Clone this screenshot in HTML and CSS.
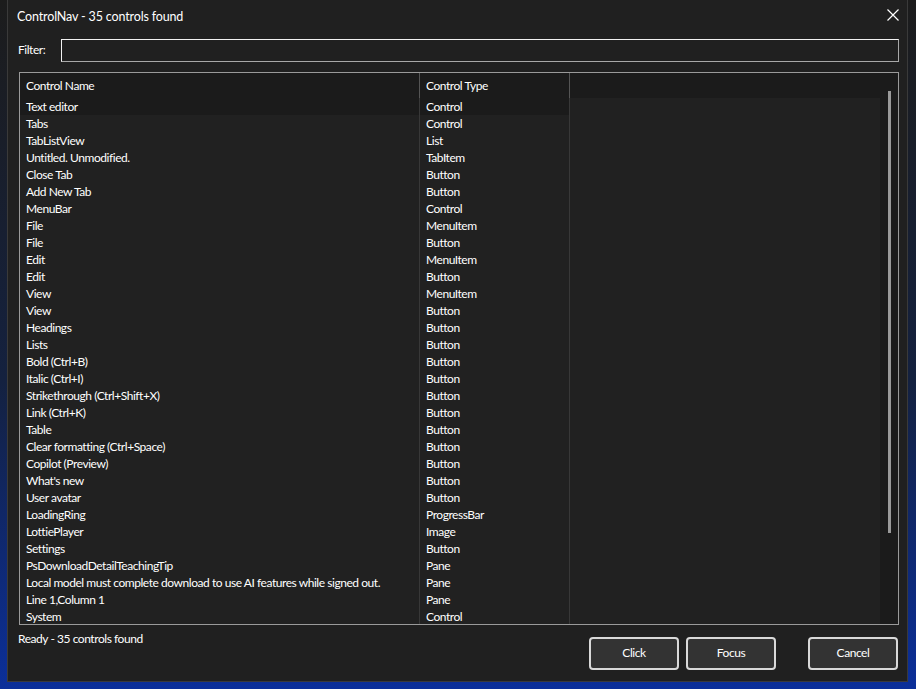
FILE: index.html
```html
<!DOCTYPE html>
<html lang="en">
  <head>
    <meta charset="UTF-8" />
    <meta name="viewport" content="width=device-width, initial-scale=1.0" />
    <title>ControlNav</title>
    <link rel="stylesheet" href="styles.css">
  </head>
  <body>
    <main class="vindue">
      <header class="titel">
        <span>ControlNav - 35 controls found</span>
        <svg class="luk" width="12" height="12" viewBox="0 0 12 12">
          <path d="M0.5 0.5 L11.5 11.5 M11.5 0.5 L0.5 11.5" stroke="#ffffff" stroke-width="1.2" fill="none" />
        </svg>
      </header>

      <div class="filter">
        <label for="filter">Filter:</label>
        <input id="filter" type="text" />
      </div>

      <section class="liste">
        <div class="visning">
          <div class="hoved">
            <span class="kol1">Control Name</span>
            <span class="kol2">Control Type</span>
            <span class="kol3"></span>
          </div>
          <div class="raekker"></div>
        </div>
        <div class="rullebar"><div class="greb"></div></div>
      </section>

      <footer class="bund">
        <p class="status">Ready - 35 controls found</p>
        <div class="knapper">
          <button>Click</button>
          <button>Focus</button>
          <button class="annuller">Cancel</button>
        </div>
      </footer>

      <template>
        <div class="raekke">
          <span class="kol1 navn"></span>
          <span class="kol2 type"></span>
          <span class="kol3"></span>
        </div>
      </template>
    </main>

    <script>
      // kontroller der er fundet
      const kontroller = [
        ["Text editor", "Control"],
        ["Tabs", "Control"],
        ["TabListView", "List"],
        ["Untitled. Unmodified.", "TabItem"],
        ["Close Tab", "Button"],
        ["Add New Tab", "Button"],
        ["MenuBar", "Control"],
        ["File", "MenuItem"],
        ["File", "Button"],
        ["Edit", "MenuItem"],
        ["Edit", "Button"],
        ["View", "MenuItem"],
        ["View", "Button"],
        ["Headings", "Button"],
        ["Lists", "Button"],
        ["Bold (Ctrl+B)", "Button"],
        ["Italic (Ctrl+I)", "Button"],
        ["Strikethrough (Ctrl+Shift+X)", "Button"],
        ["Link (Ctrl+K)", "Button"],
        ["Table", "Button"],
        ["Clear formatting (Ctrl+Space)", "Button"],
        ["Copilot (Preview)", "Button"],
        ["What's new", "Button"],
        ["User avatar", "Button"],
        ["LoadingRing", "ProgressBar"],
        ["LottiePlayer", "Image"],
        ["Settings", "Button"],
        ["PsDownloadDetailTeachingTip", "Pane"],
        ["Local model must complete download to use AI features while signed out.", "Pane"],
        ["Line 1,Column 1", "Pane"],
        ["System", "Control"],
      ];

      const container = document.querySelector(".raekker");
      const template = document.querySelector("template");

      kontroller.forEach((k, i) => {
        const klon = template.cloneNode(true).content;
        klon.querySelector(".navn").textContent = k[0];
        klon.querySelector(".type").textContent = k[1];
        if (i == 0) klon.querySelector(".raekke").classList.add("valgt");
        container.appendChild(klon);
      });
    </script>
  </body>
</html>
```

FILE: styles.css
```css
body {
  margin: 0;
  height: 689px;
  overflow: hidden;
  background: linear-gradient(180deg, #1c1c1c 0%, #14213f 55%, #0b2f9a 100%);
  font-family: Lato, "Noto Sans", sans-serif;
  font-size: 12px;
  letter-spacing: -0.45px;
  color: #ffffff;
}

.vindue {
  width: 899px;
  height: 681px;
  margin-left: 7px;
  border: 1px solid #3a3a3a;
  border-top: none;
  background-color: #202020;
  display: flex;
  flex-direction: column;
}

.titel {
  height: 32px;
  padding: 0 8px 0 9px;
  display: flex;
  align-items: center;
  justify-content: space-between;
  font-size: 12.5px;
  letter-spacing: -0.15px;
}

.luk {
  margin-top: -2px;
}

.filter {
  margin-top: 7px;
  padding: 0 8px 0 10px;
  display: flex;
  align-items: center;
}

.filter label {
  width: 43px;
  margin-top: -3px;
}

.filter input {
  flex: 1;
  height: 23px;
  box-sizing: border-box;
  margin: 0;
  border: 1px solid;
  border-color: #f2f2f2 #a8a8a8 #a8a8a8 #f2f2f2;
  background-color: #202020;
  color: #ffffff;
}

.liste {
  margin: 10px 8px 0 11px;
  height: 553px;
  box-sizing: border-box;
  border: 1px solid #9a9a9a;
  display: flex;
  overflow: hidden;
}

.visning {
  flex: 1;
  display: flex;
  flex-direction: column;
  background-color: #212121;
}

.hoved {
  height: 25px;
  display: flex;
  background-color: #1b1b1b;
}

.hoved span {
  display: flex;
  align-items: center;
  border-right: 1px solid #555555;
}

.hoved .kol3 {
  border-right: none;
}

.raekker {
  flex: 1;
  overflow: hidden;
}

.raekke {
  height: 17px;
  display: flex;
  line-height: 18px;
}

.raekke span {
  border-right: 1px solid #383838;
}

.raekke .kol3 {
  border-right: none;
}

.kol1,
.kol2 {
  box-sizing: border-box;
  padding-left: 6px;
  white-space: nowrap;
  overflow: hidden;
}

.kol1 {
  width: 400px;
}

.kol2 {
  width: 150px;
}

.kol3 {
  flex: 1;
}

.valgt .kol1,
.valgt .kol2 {
  background-color: #1b1b1b;
}

.rullebar {
  width: 18px;
  background-color: #1b1b1b;
  padding-top: 18px;
  box-sizing: border-box;
}

.greb {
  width: 3px;
  height: 442px;
  margin-left: 8px;
  background-color: #9a9a9a;
}

.bund {
  display: flex;
  justify-content: space-between;
  align-items: flex-start;
  padding: 0 9px 0 10px;
}

.status {
  margin: 6px 0 0;
}

.knapper {
  display: flex;
  gap: 7px;
  margin-top: 12px;
}

.knapper button {
  width: 90px;
  height: 33px;
  padding-bottom: 3px;
  border: 2px solid #d9d9d9;
  border-radius: 4px;
  background-color: #333333;
  color: #ffffff;
  font-family: inherit;
  font-size: 12px;
  letter-spacing: inherit;
}

.knapper .annuller {
  margin-left: 25px;
}
```
